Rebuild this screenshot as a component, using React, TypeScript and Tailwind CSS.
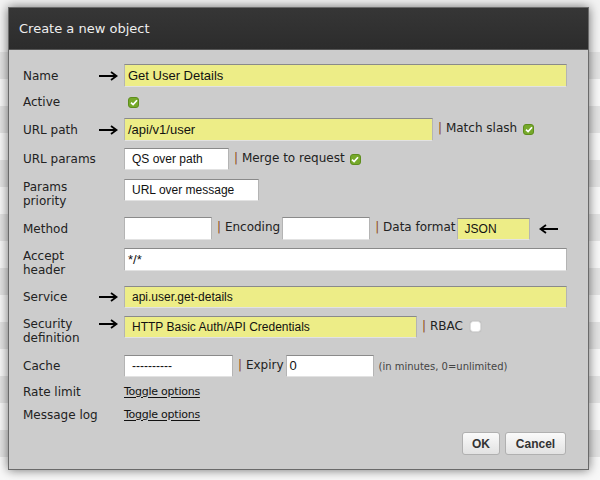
import React from "react";

const dv = "font-['DejaVu_Sans',sans-serif]";
const ar = "font-['Liberation_Sans',Arial,sans-serif]";

function Arrow({ left = false }: { left?: boolean }) {
  return (
    <svg width="19" height="10" viewBox="0 0 19 10" className={left ? "rotate-180" : ""}>
      <path d="M0 5 H17" stroke="#000" strokeWidth="2" />
      <path d="M12 1 L17.5 5 L12 9" fill="none" stroke="#000" strokeWidth="1.8" />
    </svg>
  );
}

function Check({ on = true }: { on?: boolean }) {
  if (!on)
    return <span className="inline-block w-[11px] h-[11px] rounded-[3px] bg-white border border-[#ddd] shadow-[0_0_1px_#999]" />;
  return (
    <span className="inline-flex items-center justify-center w-[11px] h-[11px] rounded-[3px] bg-[#76a92a] border border-[#5e8d1c]">
      <svg width="8" height="7" viewBox="0 0 8 7">
        <path d="M1 3.6 L3.1 5.6 L7 1.2" fill="none" stroke="#fff" strokeWidth="1.7" />
      </svg>
    </span>
  );
}

function Field({
  w,
  h = 22,
  value = "",
  yellow = false,
  big = false,
}: {
  w: string;
  h?: number;
  value?: string;
  yellow?: boolean;
  big?: boolean;
}) {
  return (
    <div
      className={`${w} ${h === 23 ? "h-[23px]" : "h-[22px]"} shrink-0 flex items-center border border-[#b4b4b4] border-t-[#8a8a8a] border-b-[#e2e2e2] ${
        yellow ? "bg-[#eded87]" : "bg-white"
      } ${ar} ${big ? "text-[13px] pl-[3px]" : "text-[12px] pl-[7px]"} text-[#111] whitespace-nowrap overflow-hidden`}
    >
      {value}
    </div>
  );
}

function Pipe({ text }: { text: string }) {
  return (
    <span className={`${dv} text-[12px] leading-[14px] pb-[3px] text-[#222] whitespace-nowrap`}>
      <span className="text-[#8e4c16]">|</span> {text}
    </span>
  );
}

function Label({ children, arrow = false, top = false }: { children: React.ReactNode; arrow?: boolean; top?: boolean }) {
  return (
    <div className={`w-[101px] shrink-0 flex justify-between ${top ? "items-start" : "items-center"}`}>
      <div className={`${dv} text-[12px] leading-[14px] text-[#222] ${top ? "pt-[1px]" : ""}`}>{children}</div>
      {arrow && (
        <div className={`mr-[6px] flex ${top ? "pt-[3px]" : ""}`}>
          <Arrow />
        </div>
      )}
    </div>
  );
}

export default function App() {
  const bands = Array.from({ length: 16 });
  return (
    <div className="relative w-[600px] h-[480px] overflow-hidden bg-[#f3f3f3]">
      <div className="pt-[52px] flex flex-col">
        {bands.map((_, i) => (
          <div key={i} className={`h-[27px] ${i % 2 === 0 ? "bg-[#e3e3e3]" : "bg-[#f8f8f8]"}`} />
        ))}
      </div>

      <div className="absolute left-[8px] top-[7px] w-[581px] h-[463px] border border-[#6a6a6a] bg-[#cccccc] shadow-[0_0_10px_rgba(0,0,0,0.55)] flex flex-col">
        <div className="h-[42px] shrink-0 bg-gradient-to-b from-[#363636] to-[#2c2c2c] border-b border-[#555] flex items-center pl-[10px]">
          <span className={`${dv} text-[13px] text-[#eeeeee]`}>Create a new object</span>
        </div>

        <div className="flex flex-col pl-[14px]">
          <div className="mt-[14px] flex items-center h-[23px]">
            <Label arrow>Name</Label>
            <Field w="w-[443px]" h={23} value="Get User Details" yellow big />
          </div>

          <div className="mt-[5px] flex items-center h-[20px]">
            <Label>Active</Label>
            <span className="ml-[4px] flex">
              <Check />
            </span>
          </div>

          <div className="mt-[6px] flex items-center h-[23px]">
            <Label arrow>URL path</Label>
            <Field w="w-[309px]" h={23} value="/api/v1/user" yellow big />
            <span className="ml-[5px] flex">
              <Pipe text="Match slash" />
            </span>
            <span className="ml-[6px] flex">
              <Check />
            </span>
          </div>

          <div className="mt-[7px] flex items-center h-[22px]">
            <Label>URL params</Label>
            <Field w="w-[105px]" value="QS over path" />
            <span className="ml-[5px] flex">
              <Pipe text="Merge to request" />
            </span>
            <span className="ml-[5px] flex">
              <Check />
            </span>
          </div>

          <div className="mt-[9px] flex items-start h-[29px]">
            <Label top>
              Params
              <br />
              priority
            </Label>
            <Field w="w-[135px]" value="URL over message" />
          </div>

          <div className="mt-[9px] flex items-center h-[23px]">
            <Label>Method</Label>
            <Field w="w-[88px]" h={23} />
            <span className="ml-[5px] flex">
              <Pipe text="Encoding" />
            </span>
            <span className="ml-[2px]">
              <Field w="w-[88px]" h={23} />
            </span>
            <span className="ml-[5px] flex">
              <Pipe text="Data format" />
            </span>
            <span className="ml-[1px]">
              <Field w="w-[73px]" value="JSON" yellow />
            </span>
            <span className="ml-[9px] flex">
              <Arrow left />
            </span>
          </div>

          <div className="mt-[8px] flex items-start h-[29px]">
            <Label top>
              Accept
              <br />
              header
            </Label>
            <Field w="w-[443px]" h={23} value="*/*" big />
          </div>

          <div className="mt-[9px] flex items-center h-[22px]">
            <Label arrow>Service</Label>
            <Field w="w-[443px]" value="api.user.get-details" yellow />
          </div>

          <div className="mt-[8px] flex items-start h-[29px]">
            <Label top arrow>
              Security
              <br />
              definition
            </Label>
            <Field w="w-[293px]" value="HTTP Basic Auth/API Credentials" yellow />
            <span className="ml-[5px] h-[22px] flex items-center">
              <Pipe text="RBAC" />
              <span className="ml-[7px] flex pb-[2px]">
                <Check on={false} />
              </span>
            </span>
          </div>

          <div className="mt-[10px] flex items-center h-[22px]">
            <Label>Cache</Label>
            <Field w="w-[109px]" value="----------" />
            <span className="ml-[5px] flex">
              <Pipe text="Expiry" />
            </span>
            <span className="ml-[2px]">
              <div className={`w-[88px] h-[22px] flex items-center border border-[#b4b4b4] border-t-[#8a8a8a] border-b-[#e2e2e2] bg-white ${ar} text-[13px] pl-[3px] text-[#111]`}>
                0
              </div>
            </span>
            <span className={`ml-[5px] ${dv} text-[10px] text-[#444] whitespace-nowrap`}>(in minutes, 0=unlimited)</span>
          </div>

          <div className="mt-[7px] flex items-center h-[16px]">
            <Label>Rate limit</Label>
            <a className={`${dv} text-[11px] tracking-[-0.25px] text-[#111] underline underline-offset-2`}>Toggle options</a>
          </div>

          <div className="mt-[7px] flex items-center h-[16px]">
            <Label>Message log</Label>
            <a className={`${dv} text-[11px] tracking-[-0.25px] text-[#111] underline underline-offset-2`}>Toggle options</a>
          </div>

          <div className="mt-[9px] flex justify-end gap-[5px] pr-[22px]">
            <button className={`w-[38px] h-[23px] rounded-[3px] border border-[#b0b0b0] bg-gradient-to-b from-[#fafafa] to-[#e2e2e2] ${ar} font-bold text-[12px] text-[#333]`}>
              OK
            </button>
            <button className={`w-[61px] h-[23px] rounded-[3px] border border-[#b0b0b0] bg-gradient-to-b from-[#fafafa] to-[#e2e2e2] ${ar} font-bold text-[12px] text-[#333]`}>
              Cancel
            </button>
          </div>
        </div>
      </div>
    </div>
  );
}
